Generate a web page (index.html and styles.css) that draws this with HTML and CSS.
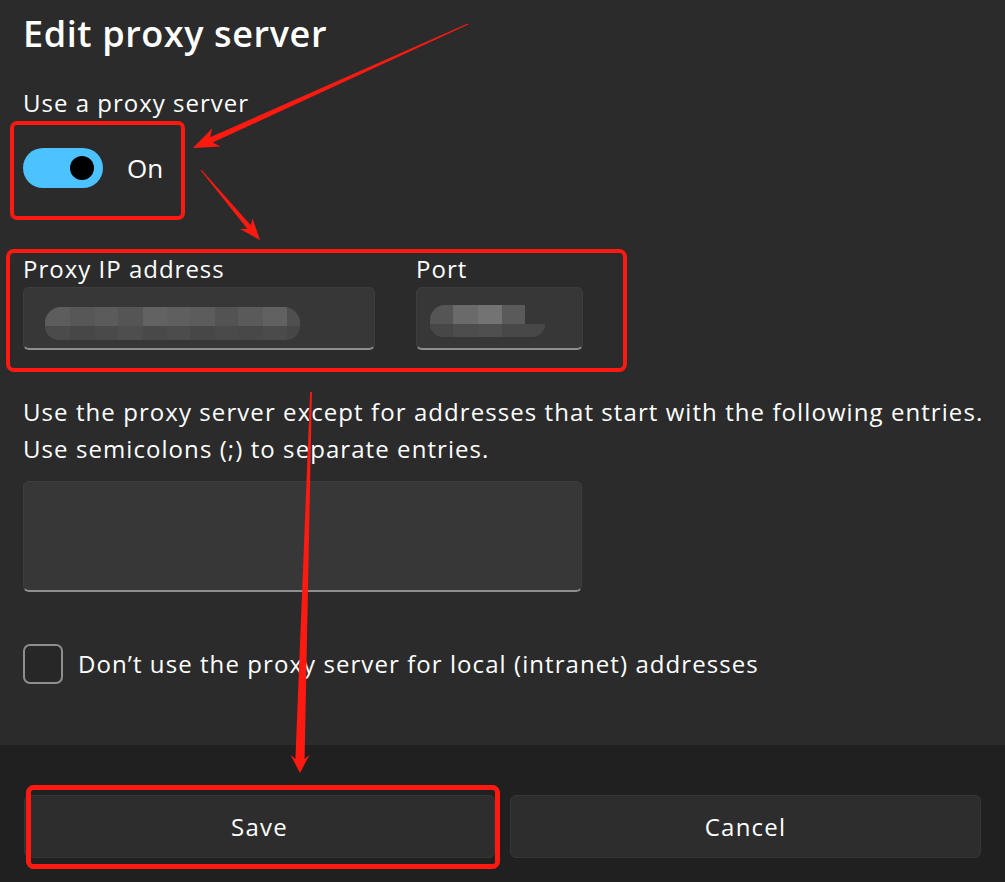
FILE: index.html
```html
<!DOCTYPE html>
<html>
  <head>
    <meta charset="utf-8">
    <link rel="stylesheet" href="styles.css">
  </head>
  <body>
    <div class="dialog">
      <div class="content">
        <h1 class="title">Edit proxy server</h1>
        <div class="label">Use a proxy server</div>
        <div class="toggle-row">
          <span class="toggle"><span class="knob"></span></span>
          <span class="toggle-text">On</span>
        </div>

        <div class="fields">
          <div class="field field-ip">
            <div class="field-label">Proxy IP address</div>
            <div class="input">
              <div class="blob blob-ip">
                <div class="blob-top"></div>
                <div class="blob-bottom"></div>
              </div>
            </div>
          </div>
          <div class="field field-port">
            <div class="field-label">Port</div>
            <div class="input">
              <div class="blob blob-port">
                <div class="blob-top"></div>
                <div class="blob-bottom"></div>
              </div>
            </div>
          </div>
        </div>

        <p class="desc">Use the proxy server except for addresses that start with the following entries.<br>Use semicolons (;) to separate entries.</p>
        <div class="input textarea"></div>

        <div class="check-row">
          <span class="checkbox"></span>
          <span class="check-text">Don’t use the proxy server for local (intranet) addresses</span>
        </div>
      </div>

      <div class="footer">
        <button class="btn">Save</button>
        <button class="btn">Cancel</button>
      </div>

      <!-- annotation marks drawn over the dialog -->
      <svg class="marks" width="1005" height="882" viewBox="0 0 1005 882">
        <g fill="none" stroke="#fe1a10">
          <rect x="12" y="123" width="171" height="95" rx="5" stroke-width="4"/>
          <rect x="8" y="251" width="617" height="119" rx="6" stroke-width="4"/>
          <rect x="28.5" y="787.5" width="469" height="79" rx="5" stroke-width="5"/>
        </g>
        <g fill="#fe1a10">
          <polygon points="468.2,24.5 212.6,142.6 220.4,146.5 193,148 212,128.6 210.2,137.2 467.8,23.5"/>
          <polygon points="200.6,170.3 247.3,228.8 240,229 260,240 252.5,218.5 250.8,225.2 201.4,169.7"/>
          <polygon points="311.9,392 304.6,759 309.5,755 300,773 290.5,755 295.4,759 310.1,392"/>
        </g>
      </svg>
    </div>
  </body>
</html>
```

FILE: styles.css
```css
body {
  margin: 0;
  background-color: #2b2b2b;
  color: #ffffff;
  font-family: "Open Sans", "Noto Sans", sans-serif;
  letter-spacing: 1.07px;
}
.dialog {
  position: relative;
  height: 100vh;
  display: flex;
  flex-direction: column;
}
.content {
  padding: 12px 24px 0 23px;
}
.title {
  margin: 0;
  font-size: 36px;
  line-height: 44px;
  font-weight: 600;
  letter-spacing: 0.6px;
}
.label {
  margin-top: 32px;
  font-size: 24px;
  line-height: 30px;
  letter-spacing: 1px;
}
.toggle-row {
  display: flex;
  align-items: center;
  gap: 24px;
  height: 40px;
  margin-top: 30px;
}
.toggle {
  width: 80px;
  height: 40px;
  box-sizing: border-box;
  padding-right: 9px;
  border-radius: 20px;
  background-color: #4cc2ff;
  display: flex;
  align-items: center;
  justify-content: flex-end;
}
.knob {
  width: 24px;
  height: 24px;
  border-radius: 50%;
  background-color: #000000;
}
.toggle-text {
  font-size: 26px;
  line-height: 40px;
  letter-spacing: 0;
}
.fields {
  display: flex;
  gap: 41px;
  margin-top: 66px;
}
.field {
  display: flex;
  flex-direction: column;
  gap: 3px;
}
.field-label {
  font-size: 24px;
  line-height: 30px;
  letter-spacing: 1px;
}
.field-ip .input {
  width: 352px;
}
.field-port .input {
  width: 167px;
}
.input {
  height: 63px;
  box-sizing: border-box;
  padding: 19px 0 0 21px;
  background-color: #373737;
  border: 1px solid #3d3d3d;
  border-bottom: 2px solid #8e8e8e;
  border-radius: 6px;
}
.field-port .input {
  padding: 17px 0 0 13px;
}
.blob {
  display: flex;
  flex-direction: column;
}
.blob-top {
  height: 19px;
}
.blob-bottom {
  height: 14px;
}
.blob-ip .blob-top {
  width: 255px;
  border-radius: 16px 16px 0 0;
  background: linear-gradient(90deg, #5d5d5d 0 25px, #575757 25px 50px, #5b5b5b 50px 73px, #555555 73px 98px, #626262 98px 122px, #5f5f5f 122px 145px, #5c5c5c 145px 170px, #535353 170px 193px, #5a5a5a 193px 218px, #616161 218px 242px, #4f4f4f 242px);
}
.blob-ip .blob-bottom {
  width: 255px;
  border-radius: 0 0 16px 16px;
  background: linear-gradient(90deg, #4b4b4b 0 25px, #474747 25px 50px, #4a4a4a 50px 73px, #4e4e4e 73px 98px, #494949 98px 122px, #4c4c4c 122px 145px, #474747 145px 170px, #4a4a4a 170px 193px, #484848 193px 218px, #4b4b4b 218px 242px, #464646 242px);
}
.blob-port .blob-top {
  width: 95px;
  border-radius: 15px 0 0 0;
  background: linear-gradient(90deg, #555555 0 23px, #6a6a6a 23px 48px, #737373 48px 72px, #5a5a5a 72px);
}
.blob-port .blob-bottom {
  height: 13px;
  width: 115px;
  border-radius: 0 0 14px 14px;
  background: linear-gradient(90deg, #474747 0 23px, #4d4d4d 23px 48px, #4f4f4f 48px 72px, #484848 72px);
}
.desc {
  margin: 43px 0 0;
  font-size: 24px;
  line-height: 37px;
  white-space: nowrap;
}
.textarea {
  width: 559px;
  height: 111px;
  margin-top: 14px;
}
.check-row {
  display: flex;
  align-items: center;
  gap: 15px;
  margin-top: 52px;
}
.checkbox {
  width: 40px;
  height: 40px;
  box-sizing: border-box;
  border: 2px solid #8e8e8e;
  border-radius: 7px;
  background-color: #272727;
}
.check-text {
  font-size: 24px;
  line-height: 30px;
}
.footer {
  margin-top: auto;
  background-color: #202020;
  padding: 50px 24px 24px;
  display: grid;
  grid-template-columns: 1fr 1fr;
  gap: 15px;
}
.btn {
  height: 63px;
  background-color: #2d2d2d;
  border: 1px solid #353535;
  border-radius: 6px;
  color: #ffffff;
  font-family: "Open Sans", "Noto Sans", sans-serif;
  font-size: 24px;
  letter-spacing: 1.2px;
}
.marks {
  position: absolute;
  top: 0;
  left: 0;
  pointer-events: none;
}
```
